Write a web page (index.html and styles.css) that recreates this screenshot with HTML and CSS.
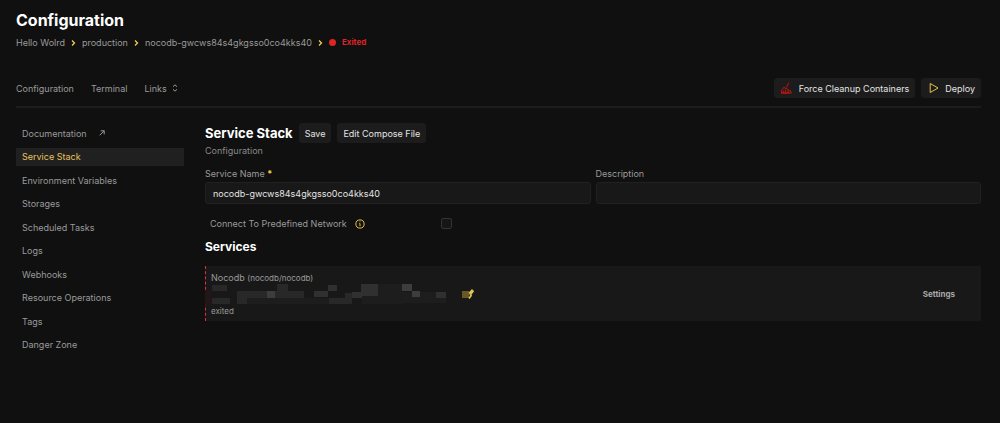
FILE: index.html
```html
<!DOCTYPE html>
<html lang="en">
<head>
<meta charset="utf-8">
<meta name="viewport" content="width=device-width, initial-scale=1">
<title>Configuration</title>
<link rel="stylesheet" href="styles.css">
</head>
<body>
<header class="page-header">
  <h1 class="page-title">Configuration</h1>
  <nav class="breadcrumb" aria-label="Breadcrumb">
    <a href="#">Hello Wolrd</a>
    <svg class="chevron" viewBox="0 0 5 8"><path d="M1 1.5 3.5 4 1 6.5"/></svg>
    <a href="#">production</a>
    <svg class="chevron" viewBox="0 0 5 8"><path d="M1 1.5 3.5 4 1 6.5"/></svg>
    <a href="#">nocodb-gwcws84s4gkgsso0co4kks40</a>
    <svg class="chevron" viewBox="0 0 5 8"><path d="M1 1.5 3.5 4 1 6.5"/></svg>
    <span class="status"><span class="status-dot"></span>Exited</span>
  </nav>
</header>
<div class="toolbar">
  <nav class="tabs" aria-label="Service">
    <a href="#">Configuration</a>
    <a href="#">Terminal</a>
    <a href="#" class="links">Links
      <svg class="sort" viewBox="0 0 6 8"><path d="M1 2.7 3 .8 5 2.7M1 5.3 3 7.2 5 5.3"/></svg></a>
  </nav>
  <div class="actions">
    <button type="button" class="btn"><svg class="broom" viewBox="0 0 12 12"><path d="M8.8.8 6.2 5.6M3.6 5.4l4.8 2.2M3.4 5.6C3 7.3 2.2 8 1.2 8.4l.6 2.7h5.6c.3-1.2.6-2.2 1-3.5M3 8.5l1.2 2.4M5.2 7.6l.6 3.3M1 11.1h10.4M9 8.6l1.6.2.5 2.2M8.8 9.6v1.4"/></svg>Force Cleanup Containers</button>
    <button type="button" class="btn"><svg class="play" viewBox="0 0 10 12"><path d="M1.2 1.5v9L9 6z"/></svg>Deploy</button>
  </div>
</div>
<div class="layout">
  <nav class="sidebar" aria-label="Configuration">
    <a href="#">Documentation <svg class="external" viewBox="0 0 6 6"><path d="M.7 5.3 5.2.8M1.7.8h3.5v3.5"/></svg></a>
    <a href="#" class="active" aria-current="page">Service Stack</a>
    <a href="#">Environment Variables</a>
    <a href="#">Storages</a>
    <a href="#">Scheduled Tasks</a>
    <a href="#">Logs</a>
    <a href="#">Webhooks</a>
    <a href="#">Resource Operations</a>
    <a href="#">Tags</a>
    <a href="#">Danger Zone</a>
  </nav>
  <main class="content">
    <form>
      <div class="heading-row">
        <h2>Service Stack</h2>
        <button type="submit" class="btn">Save</button>
        <button type="button" class="btn">Edit Compose File</button>
      </div>
      <p class="subtitle">Configuration</p>
      <div class="fields">
        <div class="field">
          <label for="name">Service Name <span class="required">*</span></label>
          <input id="name" type="text" value="nocodb-gwcws84s4gkgsso0co4kks40" required>
        </div>
        <div class="field">
          <label for="description">Description</label>
          <input id="description" type="text">
        </div>
      </div>
      <div class="option">
        <label for="network">Connect To Predefined Network
          <svg class="info" viewBox="0 0 10 10"><circle cx="5" cy="5" r="4.1"/><path d="M4.3 4.6H5v2.7M5 2.5v.8"/></svg></label>
        <input id="network" type="checkbox">
      </div>
    </form>
    <h2 class="services-title">Services</h2>
    <section class="service">
      <div class="service-info">
        <div class="service-name">Nocodb <span class="small">(nocodb/nocodb)</span></div>
        <svg class="address" viewBox="-6 1 270 21">
          <path fill="#241518" d="M-6 8h6v14h-6z"/>
          <path fill="#1d1d1d" d="M36 15h82v6H36zM151 1h40v20h-40zM191 9h44v11h-44z"/>
          <path fill="#282828" d="M1 2h15v6H1zM1 15h18v6H1zM26 8h67v7H26zM26 15h10v6H26zM66 1h11v7H66zM118 15h23v6h-23zM134 10h7v11h-7z"/>
          <path fill="#303030" d="M103 8h14v6h-14zM117 2h9v6h-9zM141 9h10v6h-10zM150 1h17v12h-17zM225 9h10v6h-10z"/>
          <path fill="#3d3d3d" d="M56 8h8v7h-8zM191 1h10v7h-10zM201 8h8v6h-8z"/>
          <path fill="#675824" d="M251 8h7v7h-7z"/>
          <path fill="none" stroke="#e0c554" stroke-width="1.7" d="M258 10.5l3-3.2 1 1-3 4M258 15.5l2.5-3.5"/>
        </svg>
        <div class="small">exited</div>
      </div>
      <a href="#" class="settings">Settings</a>
    </section>
  </main>
</div>
</body>
</html>
```
FILE: styles.css
```css
* { box-sizing: border-box; }
body {
  margin: 0;
  padding: 10px 19px 16px 16px;
  min-height: 100vh;
  background: #101010;
  color: #9a9a9a;
  font: 9px/15px Inter, "Liberation Sans", sans-serif;
}
a { color: inherit; text-decoration: none; }
h1, h2, p { margin: 0; }
svg { fill: none; stroke: currentColor; flex: none; }
h1, h2 { color: #fff; font-weight: 700; }
.page-title { font-size: 16px; line-height: 20px; }
.breadcrumb { display: flex; align-items: center; gap: 6px; padding-top: 5px; }
.chevron { width: 5px; height: 8px; color: #f5cb4f; stroke-width: 1.3; }
.status { display: flex; align-items: center; gap: 6px; color: #d92626; font-size: 8px; font-weight: 700; }
.status-dot { width: 7px; height: 7px; border-radius: 50%; background: #dc2626; }
.toolbar {
  display: flex;
  justify-content: space-between;
  align-items: center;
  margin-top: 28px;
  padding-bottom: 8px;
  border-bottom: 2px solid #1c1c1c;
}
.tabs { display: flex; gap: 17px; }
.links { display: flex; align-items: center; gap: 5px; }
.sort { width: 6px; height: 8px; }
.actions { display: flex; gap: 6px; }
.btn {
  display: flex;
  align-items: center;
  height: 20px;
  padding: 0 6px;
  border: 0;
  border-radius: 3px;
  background: #1c1c1c;
  color: #e4e4e4;
  font: inherit;
}
.broom { width: 12px; height: 12px; margin-right: 7px; color: #c8140f; }
.play { width: 10px; height: 12px; margin: 0 6px 0 2px; color: #e8c14c; }
.layout { display: grid; grid-template-columns: 168px minmax(0, 1fr); gap: 21px; padding-top: 15px; }
.sidebar {
  display: flex;
  flex-direction: column;
  justify-content: space-between;
  align-self: start;
  min-height: 231px;
  padding-top: 1px;
}
.sidebar a { display: flex; align-items: center; gap: 12px; height: 18px; padding: 0 6px; }
.sidebar .active { background: #202020; color: #e9c25a; }
.external { width: 6px; height: 6px; }
.heading-row { display: flex; align-items: center; gap: 6px; }
h2 { font-size: 13px; line-height: 20px; }
.subtitle { color: #888; }
.fields { display: grid; grid-template-columns: 1fr 1fr; gap: 5px; padding-top: 8px; }
.field { display: flex; flex-direction: column; gap: 1px; }
.required { color: #f5cb4f; font-weight: 700; }
.field input {
  width: 100%;
  height: 22px;
  padding: 0 7px;
  border: 1px solid #212121;
  border-radius: 3px;
  background: #181818;
  color: #e4e4e4;
  font: inherit;
}
.option { display: flex; align-items: center; justify-content: space-between; width: 242px; margin: 12px 0 6px 5px; }
.option label { display: flex; align-items: center; gap: 8px; }
.info { width: 10px; height: 10px; color: #e8c14c; }
.option input { appearance: none; width: 11px; height: 11px; margin: 0; border: 1px solid #333; border-radius: 2px; background: #161616; }
.services-title { font-size: 12px; }
.service {
  display: flex;
  align-items: center;
  justify-content: space-between;
  margin-top: 9px;
  padding: 5px 26px 4px 5px;
  border-left: 1px dashed #e0303c;
  background: #181818;
}
.service-name { line-height: 13px; }
.small { font-size: 8px; line-height: 12px; }
.address { display: block; width: 270px; height: 21px; margin-left: -6px; stroke: none; }
.settings { font-size: 8px; font-weight: 700; color: #a8a8a8; }
```
